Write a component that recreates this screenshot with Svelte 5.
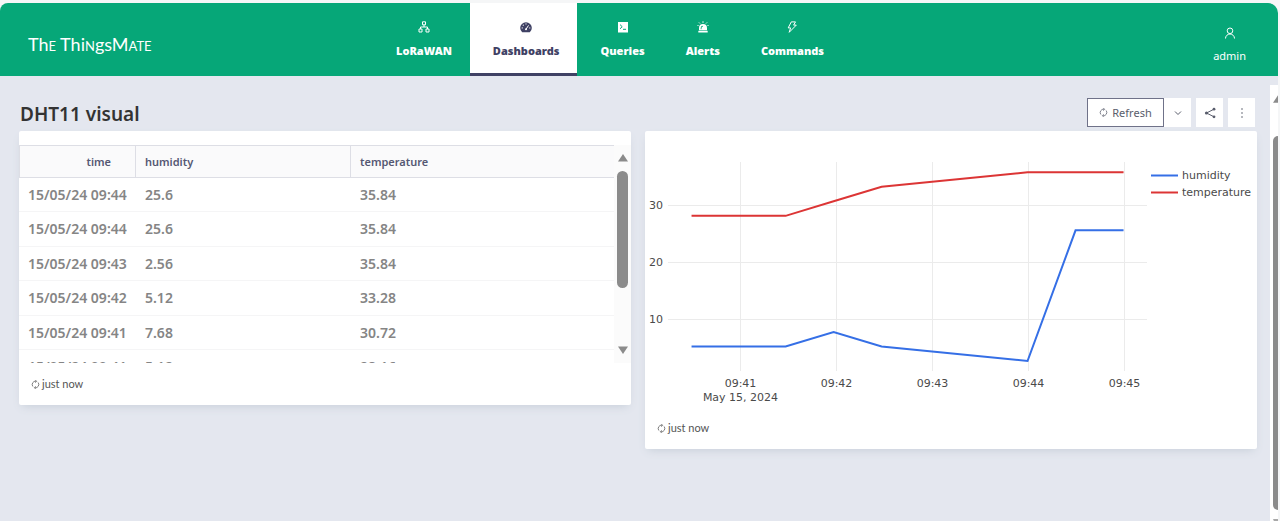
<script>
  const nav = [
    { label: 'LoRaWAN', icon: 'cluster' },
    { label: 'Dashboards', icon: 'gauge', active: true },
    { label: 'Queries', icon: 'code' },
    { label: 'Alerts', icon: 'alert' },
    { label: 'Commands', icon: 'bolt' }
  ];

  const rows = [
    ['15/05/24 09:44', '25.6', '35.84'],
    ['15/05/24 09:44', '25.6', '35.84'],
    ['15/05/24 09:43', '2.56', '35.84'],
    ['15/05/24 09:42', '5.12', '33.28'],
    ['15/05/24 09:41', '7.68', '30.72'],
    ['15/05/24 09:41', '5.12', '28.16']
  ];

  // Minutes after 09:41 paired with the reading
  const times = [-0.51, 0.47, 0.97, 1.47, 2.99, 3.49, 3.99];
  const series = [
    { name: 'humidity', color: '#356fe6', values: [5.12, 5.12, 7.68, 5.12, 2.56, 25.6, 25.6] },
    { name: 'temperature', color: '#dc3535', values: [28.16, 28.16, 30.72, 33.28, 35.84, 35.84, 35.84] }
  ];
  const ticksX = ['09:41', '09:42', '09:43', '09:44', '09:45'];
  const ticksY = [30, 20, 10];
  const px = (m) => 95.5 + m * 96;
  const py = (v) => 244.5 - v * 5.67;
  const points = (s) => s.values.map((v, i) => `${px(times[i])},${py(v)}`).join(' ');
</script>

{#snippet reload()}
  <svg class="reload" viewBox="0 0 12 12" aria-hidden="true">
    <path d="M2.500 8.700A4.400 4.400 0 0 1 6.800 1.700M9.500 3.300A4.400 4.400 0 0 1 5.200 10.300" />
    <path d="M5.800 0 7.500 1.800 5.800 3.600M6.200 8.400 4.500 10.200 6.200 12" />
  </svg>
{/snippet}

<div class="page">
  <header>
    <a class="logo" href="#home">Th<span>e</span> Thi<span>n</span>gsM<span>ate</span></a>
    <nav>
      {#each nav as item}
        <a href="#{item.icon}" class:active={item.active}>
          <svg viewBox="0 0 12 12" aria-hidden="true">
            {#if item.icon === 'cluster'}
              <path class="line" d="M4.5 .8h3v3h-3zM1 8h3v3H1zM8 8h3v3H8zM6 3.8V6M2.5 8V6h7v2" />
            {:else if item.icon === 'gauge'}
              <path d="M2 10.900A5.800 5.600 0 1 1 10 10.900Q9.800 11.200 9.300 11.200H2.700Q2.200 11.200 2 10.900Z" />
              <path class="cut" d="M6 8.300 8.500 4.400" />
              <g class="dots"><circle cx="6" cy="2.900" r=".6" /><circle cx="3.300" cy="4.200" r=".6" /><circle cx="2.200" cy="6.900" r=".6" /><circle cx="9.800" cy="6.900" r=".6" /><circle cx="6" cy="8.300" r="1" /></g>
            {:else if item.icon === 'code'}
              <path d="M1 1h10v10.500H1z" />
              <path class="mark" d="M3 3.600 5.200 5.700 3 7.800M6 8.300h3" />
            {:else if item.icon === 'alert'}
              <path fill-rule="evenodd" d="M2 9.300V7a4 4 0 0 1 8 0v2.300zM3.700 8.300h.8V7A1.600 1.600 0 0 1 6 5.400v-.7A2.300 2.300 0 0 0 3.700 7z" />
              <path d="M1.300 9.800h9.400v1.700H1.300z" />
              <path class="line" d="M6 .3v1.500M2 1.500l1 1M10 1.500l-1 1M.5 4.500h1M10.500 4.500h1" />
            {:else}
              <path class="line" d="M5.300 .9h4.200L7.600 4.100h2.700L3.200 11.300l1.400-4.400H2.200z" />
            {/if}
          </svg>
          <b>{item.label}</b>
        </a>
      {/each}
    </nav>
    <a class="user" href="#admin">
      <svg viewBox="0 0 12 12" aria-hidden="true"><circle cx="6" cy="3.800" r="2.800" /><path d="M1.500 11.500a4.500 4.500 0 0 1 9 0" /></svg>
      admin
    </a>
  </header>

  <div class="body">
    <main>
      <div class="bar">
        <h1>DHT11 visual</h1>
        <div class="tools">
          <div class="group">
            <button class="refresh">{@render reload()}Refresh</button>
            <button aria-label="Refresh interval"><svg viewBox="0 0 12 12"><path d="M3 4.500 6 7.500 9 4.500" /></svg></button>
          </div>
          <button aria-label="Share"><svg viewBox="0 0 12 12"><path d="M10 2.200 2.500 6 10 9.800" /><g class="solid"><circle cx="10" cy="2.200" r="1.400" /><circle cx="2.500" cy="6" r="1.600" /><circle cx="10" cy="9.800" r="1.400" /></g></svg></button>
          <button aria-label="More options"><svg viewBox="0 0 12 12"><g class="solid"><circle cx="6" cy="2" r=".8" /><circle cx="6" cy="6" r=".8" /><circle cx="6" cy="10" r=".8" /></g></svg></button>
        </div>
      </div>

      <div class="cards">
        <section class="card">
          <div class="pane">
            <div class="clip">
              <table>
                <thead><tr><th class="time">time</th><th class="hum">humidity</th><th>temperature</th></tr></thead>
                <tbody>
                  {#each rows as row}
                    <tr>{#each row as cell}<td>{cell}</td>{/each}</tr>
                  {/each}
                </tbody>
              </table>
            </div>
            <div class="scroll" aria-hidden="true">
              <svg viewBox="0 0 12 10"><path d="M6 1 11 8.500H1z" /></svg>
              <i></i>
              <svg class="down" viewBox="0 0 12 10"><path d="M6 9 11 1.500H1z" /></svg>
            </div>
          </div>
          <footer>{@render reload()}just now</footer>
        </section>

        <section class="card">
          <svg class="chart" viewBox="0 0 612 276" role="img" aria-label="humidity and temperature">
            {#each ticksY as t}
              <path class="grid" d="M23 {Math.round(py(t)) + 0.5}H502" />
              <text x="18" y={Math.round(py(t)) + 4} text-anchor="end">{t}</text>
            {/each}
            {#each ticksX as t, i}
              <path class="grid" d="M{px(i)} 31V240" />
              <text x={px(i)} y="256" text-anchor="middle">{t}</text>
            {/each}
            <text x="95.5" y="270" text-anchor="middle">May 15, 2024</text>
            {#each series as s, i}
              <polyline points={points(s)} stroke={s.color} />
              <path d="M506 {44.5 + i * 17}H533" stroke={s.color} stroke-width="2" />
              <text x="537" y={48 + i * 17}>{s.name}</text>
            {/each}
          </svg>
          <footer>{@render reload()}just now</footer>
        </section>
      </div>
    </main>
    <div class="rail" aria-hidden="true">
      <svg viewBox="0 0 6 10"><path d="M6 0V9H0z" /></svg>
      <i></i>
      <svg class="end" viewBox="0 0 6 2"><path d="M0 0h6v2H1z" /></svg>
    </div>
  </div>
</div>

<style>
  :global(body) { margin: 0; background: #f5f6f7; }
  :global(*) { box-sizing: border-box; }
  .page {
    display: flex;
    flex-direction: column;
    min-height: 100vh;
    padding: 3px 2px 0 0;
    font-family: "Noto Sans", sans-serif;
    color: #333;
  }
  a { color: inherit; text-decoration: none; }
  header {
    display: grid;
    grid-template-columns: 345px auto 1fr;
    height: 73px;
    padding: 0 32px 0 28px;
    background: #06a778;
    border-radius: 8px 10px 0 0;
    color: #fff;
  }
  .logo {
    align-self: center;
    padding-top: 8px;
    font: 18px/24px Lato, sans-serif;
  }
  .logo span { font-variant: small-caps; }
  nav { display: flex; }
  nav a {
    display: flex;
    flex-direction: column;
    align-items: center;
    gap: 8px;
    padding: 18px 18px 0 23px;
  }
  nav svg { width: 12px; height: 12px; fill: currentColor; }
  nav b { font: 900 11px/20px "Noto Sans", sans-serif; }
  nav .active { background: #fff; color: #3f4164; border-bottom: 3px solid #3f4164; }
  .line { fill: none; stroke: currentColor; }
  .cut { stroke: #fff; }
  .dots { fill: #fff; }
  .mark { fill: none; stroke: #06a778; }
  .user {
    justify-self: end;
    display: flex;
    flex-direction: column;
    align-items: center;
    gap: 7px;
    padding-top: 24px;
    font-size: 11px;
    line-height: 20px;
  }
  .user svg { width: 12px; height: 12px; fill: none; stroke: #fff; }
  .body { flex: 1; display: flex; background: #e4e7ef; }
  main { flex: 1; padding: 22px 13px 40px 19px; }
  .bar { display: flex; justify-content: space-between; height: 33px; padding: 0 2px 0 1px; }
  h1 { margin: 0; font: 600 19px/32px "Noto Sans", sans-serif; }
  .tools { display: flex; gap: 5px; height: 29px; }
  .group { display: flex; }
  button {
    display: flex;
    align-items: center;
    justify-content: center;
    width: 27px;
    padding: 0;
    border: 0;
    background: #fff;
    color: #595d6c;
    font: 11px/20px "Noto Sans", sans-serif;
  }
  button svg { width: 12px; height: 12px; fill: none; stroke: currentColor; }
  .solid { fill: currentColor; stroke: none; }
  .refresh { width: 77px; gap: 4px; border: 1px solid #6f7289; }
  .reload, .refresh .reload { width: 9px; height: 9px; fill: none; stroke: currentColor; }
  .cards {
    display: grid;
    grid-template-columns: 1fr 1fr;
    gap: 14px;
    align-items: start;
  }
  .card { min-width: 0; background: #fff; border-radius: 2px; box-shadow: 0 4px 9px -3px #c6ced8; }
  .pane { display: flex; height: 232px; padding-top: 14px; }
  .clip { flex: 1; overflow: hidden; }
  table { width: 100%; border-collapse: separate; border-spacing: 0; table-layout: fixed; text-align: left; }
  th, td { height: 34px; padding: 0 9px; white-space: nowrap; }
  tr:nth-child(2n) td { height: 35px; }
  th {
    height: 33px;
    background: #fafafb;
    border: solid #dddee5;
    border-width: 1px 1px 1px 0;
    color: #555873;
    font-size: 11px;
    font-weight: 600;
  }
  th:first-child { border-left-width: 1px; }
  th:last-child { border-right: 0; }
  .time { width: 117px; padding-right: 24px; text-align: right; }
  .hum { width: 215px; }
  td { border-bottom: 1px solid #f5f5f6; color: #858585; font: 600 14px/20px "Noto Sans", sans-serif; }
  .scroll {
    display: flex;
    flex-direction: column;
    align-items: center;
    width: 17px;
    padding: 8px 0;
    background: #fbfbfb;
    fill: #8b8b8b;
  }
  .scroll svg { width: 12px; height: 10px; }
  .scroll i { width: 11px; height: 117px; margin-top: 8px; border-radius: 6px; background: #8b8b8b; }
  .scroll .down { margin-top: auto; }
  footer {
    display: flex;
    align-items: center;
    gap: 2px;
    height: 42px;
    padding: 0 12px;
    color: #555;
    font: 11px/20px Lato, sans-serif;
  }
  .chart { display: block; width: 100%; font-family: "DejaVu Sans", sans-serif; font-size: 11px; fill: #4a4a4a; }
  .grid { stroke: #ebebeb; }
  polyline { fill: none; stroke-width: 2; }
  .rail {
    display: flex;
    flex-direction: column;
    width: 8px;
    margin-top: 9px;
    padding: 10px 0 0 3px;
    background: #fff;
    fill: #8b8b8b;
  }
  .rail svg { height: 9px; }
  .rail i { flex: 1; margin: 32px 0 9px; border-radius: 5px 0 0 5px; background: #8b8b8b; }
  .rail .end { height: 2px; }
</style>
